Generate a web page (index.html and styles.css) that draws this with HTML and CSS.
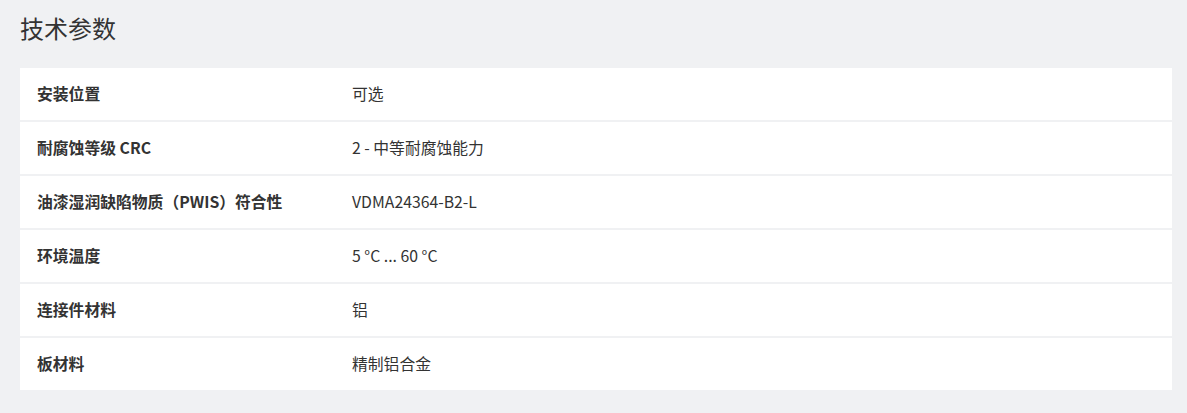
FILE: index.html
```html
<!DOCTYPE html>
<html lang="zh-CN">
<head>
<meta charset="utf-8">
<title>技术参数</title>
<link rel="stylesheet" href="styles.css">
</head>
<body>
<section class="specs">
  <h2 class="specs-title">技术参数</h2>
  <div class="specs-table">
    <div class="row"><div class="label">安装位置</div><div class="value">可选</div></div>
    <div class="row"><div class="label">耐腐蚀等级 CRC</div><div class="value">2 - 中等耐腐蚀能力</div></div>
    <div class="row"><div class="label">油漆湿润缺陷物质（PWIS）符合性</div><div class="value">VDMA24364-B2-L</div></div>
    <div class="row"><div class="label">环境温度</div><div class="value">5 °C ... 60 °C</div></div>
    <div class="row"><div class="label">连接件材料</div><div class="value">铝</div></div>
    <div class="row"><div class="label">板材料</div><div class="value">精制铝合金</div></div>
  </div>
</section>
</body>
</html>
```
FILE: styles.css
```css
html, body {
  margin: 0;
  padding: 0;
  background: #f0f1f3;
}
body {
  font-family: "Noto Sans CJK SC", "Noto Sans", sans-serif;
  color: #333333;
}
.specs {
  padding: 0 15px 0 20px;
}
.specs-title {
  margin: 0;
  height: 68px;
  font-size: 24px;
  font-weight: 400;
  line-height: 56px;
  color: #333333;
}
.specs-table {
  display: flex;
  flex-direction: column;
  gap: 2px;
}
.row {
  display: grid;
  grid-template-columns: 315px 1fr;
  align-items: center;
  height: 52px;
  padding-left: 17px;
  background: #ffffff;
  font-size: 15.8px;
  line-height: 20px;
}
.label {
  font-weight: 700;
}
.value {
  font-weight: 400;
}
```
